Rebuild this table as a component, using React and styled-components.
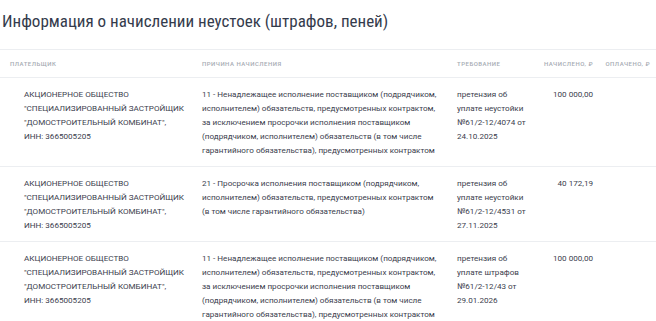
import React from "react";
import styled, { createGlobalStyle } from "styled-components";

const GlobalStyle = createGlobalStyle`
  body {
    margin: 0;
    background: #ffffff;
    font-family: Roboto, "Noto Sans", sans-serif;
    overflow: hidden;
  }
`;

const rows = [
  {
    payer:
      'АКЦИОНЕРНОЕ ОБЩЕСТВО "СПЕЦИАЛИЗИРОВАННЫЙ ЗАСТРОЙЩИК "ДОМОСТРОИТЕЛЬНЫЙ КОМБИНАТ", ИНН: 3665005205',
    reason:
      "11 - Ненадлежащее исполнение поставщиком (подрядчиком, исполнителем) обязательств, предусмотренных контрактом, за исключением просрочки исполнения поставщиком (подрядчиком, исполнителем) обязательств (в том числе гарантийного обязательства), предусмотренных контрактом",
    claim: "претензия об уплате неустойки №61/2-12/4074 от 24.10.2025",
    accrued: "100 000,00",
    paid: "",
  },
  {
    payer:
      'АКЦИОНЕРНОЕ ОБЩЕСТВО "СПЕЦИАЛИЗИРОВАННЫЙ ЗАСТРОЙЩИК "ДОМОСТРОИТЕЛЬНЫЙ КОМБИНАТ", ИНН: 3665005205',
    reason:
      "21 - Просрочка исполнения поставщиком (подрядчиком, исполнителем) обязательств, предусмотренных контрактом (в том числе гарантийного обязательства)",
    claim: "претензия об уплате неустойки №61/2-12/4531 от 27.11.2025",
    accrued: "40 172,19",
    paid: "",
  },
  {
    payer:
      'АКЦИОНЕРНОЕ ОБЩЕСТВО "СПЕЦИАЛИЗИРОВАННЫЙ ЗАСТРОЙЩИК "ДОМОСТРОИТЕЛЬНЫЙ КОМБИНАТ", ИНН: 3665005205',
    reason:
      "11 - Ненадлежащее исполнение поставщиком (подрядчиком, исполнителем) обязательств, предусмотренных контрактом, за исключением просрочки исполнения поставщиком (подрядчиком, исполнителем) обязательств (в том числе гарантийного обязательства), предусмотренных контрактом",
    claim: "претензия об уплате штрафов №61/2-12/43 от 29.01.2026",
    accrued: "100 000,00",
    paid: "",
  },
];

// column widths, px (sum = 656)
const columns = [192, 255, 92, 64, 53];

const App = () => {
  return (
    <>
      <GlobalStyle />
      <Section>
        <Title>Информация о начислении неустоек (штрафов, пеней)</Title>
        <Table>
          <colgroup>
            {columns.map((width, i) => (
              <col key={i} style={{ width }} />
            ))}
          </colgroup>
          <thead>
            <tr>
              <Th>Плательщик</Th>
              <Th>Причина начисления</Th>
              <Th>Требование</Th>
              <Th $right>Начислено, ₽</Th>
              <Th $right $pr="6px">Оплачено, ₽</Th>
            </tr>
          </thead>
          <tbody>
            {rows.map((row, index) => (
              <tr key={index}>
                <Td $pl="24px" $pr="7px">{row.payer}</Td>
                <Td $pr="6px">{row.reason}</Td>
                <Td $pr="8px">{row.claim}</Td>
                <Td $right>{row.accrued}</Td>
                <Td $right $pr="6px">{row.paid}</Td>
              </tr>
            ))}
          </tbody>
        </Table>
      </Section>
    </>
  );
};

export default App;

const Section = styled.section`
  width: 656px;
`;

const Title = styled.h2`
  margin: 0;
  padding: 9px 0 0 2px;
  height: 49px;
  box-sizing: border-box;
  font-size: 17px;
  font-stretch: 85%;
  line-height: 24px;
  font-weight: 400;
  color: #343b4c;
  white-space: nowrap;
`;

const Table = styled.table`
  width: 656px;
  table-layout: fixed;
  border-collapse: collapse;
`;

const Th = styled.th`
  height: 28px;
  padding: 0 ${(p) => p.$pr || "10px"} 0 ${(p) => (p.$right ? "0" : "10px")};
  border-top: 1px solid #eceef1;
  border-bottom: 1px solid #eceef1;
  text-align: ${(p) => (p.$right ? "right" : "left")};
  font-size: 6px;
  font-weight: 500;
  letter-spacing: 0.5px;
  text-transform: uppercase;
  color: #a6abb3;
  white-space: nowrap;
  box-sizing: border-box;
`;

const Td = styled.td`
  padding: 9px ${(p) => p.$pr || "10px"} 9px
    ${(p) => p.$pl || (p.$right ? "0" : "10px")};
  border-bottom: 1px solid #eceef1;
  vertical-align: top;
  text-align: ${(p) => (p.$right ? "right" : "left")};
  font-size: 8.1px;
  line-height: 14px;
  color: #3b404d;
`;
